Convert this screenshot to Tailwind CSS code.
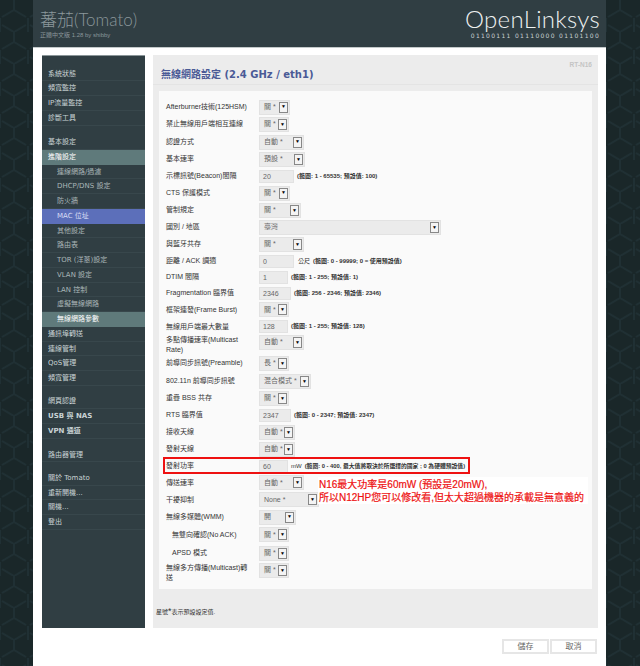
<!DOCTYPE html>
<html lang="zh-Hant">

<head>
  <meta charset="UTF-8">
  <title>Tomato - 無線網路設定</title>
  <script src="https://cdn.jsdelivr.net/npm/@tailwindcss/browser@4"></script>
</head>

<body class="bg-[#1a2729] font-['Liberation_Sans','Noto_Sans_CJK_TC',sans-serif] text-[7px] text-[#333]">
  <div class="flex w-[640px] h-[666px] overflow-hidden">

    <!-- left pattern strip -->
    <svg class="w-[33px] h-[666px] shrink-0" width="33" height="666">
      <defs>
        <pattern id="hexa" width="28" height="32" patternUnits="userSpaceOnUse">
          <path d="M14 0v10M14 10L2 17M14 10l12 7M0 18v14M28 18v14M14 32L2 25M14 32l12-7" fill="none" stroke="#203034" stroke-width="2" />
        </pattern>
      </defs>
      <rect width="33" height="666" fill="url(#hexa)" />
    </svg>

    <div class="w-[573px] shrink-0 flex flex-col bg-white">
      <!-- Header -->
      <div class="h-[48px] shrink-0 bg-[#303e43] border-b border-[#c3c9ca] flex justify-between pl-[7px] pr-[6px]">
        <div class="pt-[10px]">
          <div class="text-[17px] leading-[20px] text-[#8b979b] font-['Lato','Noto_Sans_CJK_TC',sans-serif] font-light">蕃茄(Tomato)</div>
          <div class="text-[6px] leading-[8px] text-[#8b979b] mt-[1px]">正體中文版 1.28 by shibby</div>
        </div>
        <div class="flex flex-col items-end pt-[5px]">
          <div class="text-[24px] leading-[27px] tracking-[0.3px] text-[#eef1f1] font-['Lato',sans-serif] font-light">OpenLinksys</div>
          <div class="text-[6px] leading-[8px] tracking-[1.3px] text-[#c9d0d1] font-['DejaVu_Sans',sans-serif]">01100111 01110000 01101100</div>
        </div>
      </div>

      <div class="flex gap-[8px] pt-[7px] pl-[9px] pr-[8px] h-[580px] shrink-0">
        <!-- Sidebar -->
        <nav class="w-[103px] h-[573px] shrink-0 bg-[#303e43] border-t border-[#8b9699] pt-[10.6px] text-[7px] text-[#c9d3d5] font-['DejaVu_Sans','Noto_Sans_CJK_TC',sans-serif]">
          <div class="h-[14.75px] leading-[14.75px] pl-[6px] border-b border-[#38474c]">系統狀態</div>
          <div class="h-[14.75px] leading-[14.75px] pl-[6px] border-b border-[#38474c]">頻寬監控</div>
          <div class="h-[14.75px] leading-[14.75px] pl-[6px] border-b border-[#38474c]">IP流量監控</div>
          <div class="h-[14.75px] leading-[14.75px] pl-[6px] border-b border-[#38474c]">診斷工具</div>
          <div class="h-[9.5px]"></div>
          <div class="h-[14.75px] leading-[14.75px] pl-[6px] border-b border-[#38474c]">基本設定</div>
          <div class="h-[14.75px] leading-[14.75px] pl-[6px] bg-[#5f7a7b] text-white">進階設定</div>
          <div class="h-[14.75px] leading-[14.75px] pl-[15px] border-b border-[#38474c] text-[#aab6b8]">連線網路/過濾</div>
          <div class="h-[14.75px] leading-[14.75px] pl-[15px] border-b border-[#38474c] text-[#aab6b8]">DHCP/DNS 設定</div>
          <div class="h-[14.75px] leading-[14.75px] pl-[15px] border-b border-[#38474c] text-[#aab6b8]">防火牆</div>
          <div class="h-[14.75px] leading-[14.75px] pl-[15px] bg-[#5c6fba] text-[#d8def5]">MAC 位址</div>
          <div class="h-[14.75px] leading-[14.75px] pl-[15px] border-b border-[#38474c] text-[#aab6b8]">其他設定</div>
          <div class="h-[14.75px] leading-[14.75px] pl-[15px] border-b border-[#38474c] text-[#aab6b8]">路由表</div>
          <div class="h-[14.75px] leading-[14.75px] pl-[15px] border-b border-[#38474c] text-[#aab6b8]">TOR (洋蔥)設定</div>
          <div class="h-[14.75px] leading-[14.75px] pl-[15px] border-b border-[#38474c] text-[#aab6b8]">VLAN 設定</div>
          <div class="h-[14.75px] leading-[14.75px] pl-[15px] border-b border-[#38474c] text-[#aab6b8]">LAN 控制</div>
          <div class="h-[14.75px] leading-[14.75px] pl-[15px] border-b border-[#38474c] text-[#aab6b8]">虛擬無線網路</div>
          <div class="h-[14.75px] leading-[14.75px] pl-[15px] bg-[#5f7a7b] text-white">無線網路參數</div>
          <div class="h-[14.75px] leading-[14.75px] pl-[6px] border-b border-[#38474c]">通訊埠轉送</div>
          <div class="h-[14.75px] leading-[14.75px] pl-[6px] border-b border-[#38474c]">連線管制</div>
          <div class="h-[14.75px] leading-[14.75px] pl-[6px] border-b border-[#38474c]">QoS管理</div>
          <div class="h-[14.75px] leading-[14.75px] pl-[6px] border-b border-[#38474c]">頻寬管理</div>
          <div class="h-[8.5px]"></div>
          <div class="h-[14.75px] leading-[14.75px] pl-[6px] border-b border-[#38474c]">網頁認證</div>
          <div class="h-[14.75px] leading-[14.75px] pl-[6px] border-b border-[#38474c] font-bold">USB 與 NAS</div>
          <div class="h-[14.75px] leading-[14.75px] pl-[6px] border-b border-[#38474c] font-bold">VPN 通道</div>
          <div class="h-[9px]"></div>
          <div class="h-[14.75px] leading-[14.75px] pl-[6px] border-b border-[#38474c]">路由器管理</div>
          <div class="h-[8.5px]"></div>
          <div class="h-[14.75px] leading-[14.75px] pl-[6px] border-b border-[#38474c]">關於 Tomato</div>
          <div class="h-[14.75px] leading-[14.75px] pl-[6px] border-b border-[#38474c]">重新開機...</div>
          <div class="h-[14.75px] leading-[14.75px] pl-[6px] border-b border-[#38474c]">關機...</div>
          <div class="h-[14.75px] leading-[14.75px] pl-[6px] border-b border-[#38474c]">登出</div>
        </nav>

        <!-- Main -->
        <main class="relative w-[445px] h-[573px] shrink-0 bg-[#ececec] whitespace-nowrap">
          <div class="absolute right-[6px] top-[5px] text-[6.5px] font-bold text-[#c4c4c4]">RT-N16</div>
          <h1 class="h-[30px] pl-[8px] pt-[12px] text-[10px] leading-[16px] font-bold text-[#4a5a96] font-['DejaVu_Sans','Noto_Sans_CJK_TC',sans-serif] border-b border-[#e4e4e4]">無線網路設定 (2.4 GHz / eth1)</h1>

          <!-- Settings form -->
          <div class="relative mt-[6px] mx-[6px] h-[498px] bg-[#fafafa] pt-[7.25px] pl-[7px]">
            <div class="flex items-center h-[17.5px]">
              <div class="w-[93px] shrink-0">Afterburner技術(125HSM)</div>
              <div class="w-[31px] h-[15px] bg-[#ebebeb] border border-[#e2e2e2] flex items-center justify-between pl-[4px] pr-[1px] text-[#666]">關 *<span class="w-[9px] h-[11px] border border-[#888] bg-[#f4f4f4] flex items-center justify-center text-[5px] text-black">▼</span></div>
            </div>
            <div class="flex items-center h-[17.5px]">
              <div class="w-[93px] shrink-0">禁止無線用戶端相互連線</div>
              <div class="w-[30px] h-[15px] bg-[#ebebeb] border border-[#e2e2e2] flex items-center justify-between pl-[4px] pr-[1px] text-[#666]">關 *<span class="w-[9px] h-[11px] border border-[#888] bg-[#f4f4f4] flex items-center justify-center text-[5px] text-black">▼</span></div>
            </div>
            <div class="flex items-center h-[17.75px]">
              <div class="w-[93px] shrink-0">認證方式</div>
              <div class="w-[45px] h-[15px] bg-[#ebebeb] border border-[#e2e2e2] flex items-center justify-between pl-[4px] pr-[1px] text-[#666]">自動 *<span class="w-[9px] h-[11px] border border-[#888] bg-[#f4f4f4] flex items-center justify-center text-[5px] text-black">▼</span></div>
            </div>
            <div class="flex items-center h-[17.2px]">
              <div class="w-[93px] shrink-0">基本速率</div>
              <div class="w-[46px] h-[15px] bg-[#ebebeb] border border-[#e2e2e2] flex items-center justify-between pl-[4px] pr-[1px] text-[#666]">預設 *<span class="w-[9px] h-[11px] border border-[#888] bg-[#f4f4f4] flex items-center justify-center text-[5px] text-black">▼</span></div>
            </div>
            <div class="flex items-center h-[16.5px]">
              <div class="w-[93px] shrink-0">示標訊號(Beacon)間隔</div>
              <div class="w-[35px] h-[13px] bg-[#ebebeb] border border-[#e2e2e2] pl-[3px] leading-[11px] text-[#666]">20</div>
              <div class="ml-[3px] text-[6px] font-bold">(範圍: 1 - 65535; 預設值: 100)</div>
            </div>
            <div class="flex items-center h-[17px]">
              <div class="w-[93px] shrink-0">CTS 保護模式</div>
              <div class="w-[31px] h-[15px] bg-[#ebebeb] border border-[#e2e2e2] flex items-center justify-between pl-[4px] pr-[1px] text-[#666]">關 *<span class="w-[9px] h-[11px] border border-[#888] bg-[#f4f4f4] flex items-center justify-center text-[5px] text-black">▼</span></div>
            </div>
            <div class="flex items-center h-[17.2px]">
              <div class="w-[93px] shrink-0">管制規定</div>
              <div class="w-[42px] h-[15px] bg-[#ebebeb] border border-[#e2e2e2] flex items-center justify-between pl-[4px] pr-[1px] text-[#666]">關 *<span class="w-[9px] h-[11px] border border-[#888] bg-[#f4f4f4] flex items-center justify-center text-[5px] text-black">▼</span></div>
            </div>
            <div class="flex items-center h-[17.2px]">
              <div class="w-[93px] shrink-0">國別 / 地區</div>
              <div class="w-[182px] h-[15px] bg-[#ebebeb] border border-[#e2e2e2] flex items-center justify-between pl-[4px] pr-[1px] text-[#666]">臺灣<span class="w-[9px] h-[11px] border border-[#888] bg-[#f4f4f4] flex items-center justify-center text-[5px] text-black">▼</span></div>
            </div>
            <div class="flex items-center h-[17.2px]">
              <div class="w-[93px] shrink-0">與藍牙共存</div>
              <div class="w-[45px] h-[15px] bg-[#ebebeb] border border-[#e2e2e2] flex items-center justify-between pl-[4px] pr-[1px] text-[#666]">關 *<span class="w-[9px] h-[11px] border border-[#888] bg-[#f4f4f4] flex items-center justify-center text-[5px] text-black">▼</span></div>
            </div>
            <div class="flex items-center h-[16.5px]">
              <div class="w-[93px] shrink-0">距離 / ACK 調適</div>
              <div class="w-[35px] h-[13px] bg-[#ebebeb] border border-[#e2e2e2] pl-[3px] leading-[11px] text-[#666]">0</div>
              <div class="ml-[4px] text-[6px]">公尺</div>
              <div class="ml-[3px] text-[6px] font-bold">(範圍: 0 - 99999; 0 = 使用預設值)</div>
            </div>
            <div class="flex items-center h-[15.8px]">
              <div class="w-[93px] shrink-0">DTIM 間隔</div>
              <div class="w-[29px] h-[13px] bg-[#ebebeb] border border-[#e2e2e2] pl-[3px] leading-[11px] text-[#666]">1</div>
              <div class="ml-[3px] text-[6px] font-bold">(範圍: 1 - 255; 預設值: 1)</div>
            </div>
            <div class="flex items-center h-[16px]">
              <div class="w-[93px] shrink-0">Fragmentation 臨界值</div>
              <div class="w-[32px] h-[13px] bg-[#ebebeb] border border-[#e2e2e2] pl-[3px] leading-[11px] text-[#666]">2346</div>
              <div class="ml-[3px] text-[6px] font-bold">(範圍: 256 - 2346; 預設值: 2346)</div>
            </div>
            <div class="flex items-center h-[16.5px]">
              <div class="w-[93px] shrink-0">框架連發(Frame Burst)</div>
              <div class="w-[30px] h-[15px] bg-[#ebebeb] border border-[#e2e2e2] flex items-center justify-between pl-[4px] pr-[1px] text-[#666]">關 *<span class="w-[9px] h-[11px] border border-[#888] bg-[#f4f4f4] flex items-center justify-center text-[5px] text-black">▼</span></div>
            </div>
            <div class="flex items-center h-[17.5px]">
              <div class="w-[93px] shrink-0">無線用戶端最大數量</div>
              <div class="w-[29px] h-[13px] bg-[#ebebeb] border border-[#e2e2e2] pl-[3px] leading-[11px] text-[#666]">128</div>
              <div class="ml-[3px] text-[6px] font-bold">(範圍: 1 - 255; 預設值: 128)</div>
            </div>
            <div class="flex items-center h-[18.8px]">
              <div class="w-[93px] shrink-0 leading-[10px]">多點傳播速率(Multicast<br>Rate)</div>
              <div class="w-[45px] h-[15px] mb-[5px] bg-[#ebebeb] border border-[#e2e2e2] flex items-center justify-between pl-[4px] pr-[1px] text-[#666]">自動 *<span class="w-[9px] h-[11px] border border-[#888] bg-[#f4f4f4] flex items-center justify-center text-[5px] text-black">▼</span></div>
            </div>
            <div class="flex items-center h-[18.2px]">
              <div class="w-[93px] shrink-0">前導同步訊號(Preamble)</div>
              <div class="w-[30px] h-[15px] bg-[#ebebeb] border border-[#e2e2e2] flex items-center justify-between pl-[4px] pr-[1px] text-[#666]">長 *<span class="w-[9px] h-[11px] border border-[#888] bg-[#f4f4f4] flex items-center justify-center text-[5px] text-black">▼</span></div>
            </div>
            <div class="flex items-center h-[17.5px]">
              <div class="w-[93px] shrink-0">802.11n 前導同步訊號</div>
              <div class="w-[52px] h-[15px] bg-[#ebebeb] border border-[#e2e2e2] flex items-center justify-between pl-[4px] pr-[1px] text-[#666]">混合模式 *<span class="w-[9px] h-[11px] border border-[#888] bg-[#f4f4f4] flex items-center justify-center text-[5px] text-black">▼</span></div>
            </div>
            <div class="flex items-center h-[17.2px]">
              <div class="w-[93px] shrink-0">重疊 BSS 共存</div>
              <div class="w-[30px] h-[15px] bg-[#ebebeb] border border-[#e2e2e2] flex items-center justify-between pl-[4px] pr-[1px] text-[#666]">關 *<span class="w-[9px] h-[11px] border border-[#888] bg-[#f4f4f4] flex items-center justify-center text-[5px] text-black">▼</span></div>
            </div>
            <div class="flex items-center h-[16.8px]">
              <div class="w-[93px] shrink-0">RTS 臨界值</div>
              <div class="w-[32px] h-[13px] bg-[#ebebeb] border border-[#e2e2e2] pl-[3px] leading-[11px] text-[#666]">2347</div>
              <div class="ml-[3px] text-[6px] font-bold">(範圍: 0 - 2347; 預設值: 2347)</div>
            </div>
            <div class="flex items-center h-[17px]">
              <div class="w-[93px] shrink-0">接收天線</div>
              <div class="w-[36px] h-[15px] bg-[#ebebeb] border border-[#e2e2e2] flex items-center justify-between pl-[4px] pr-[1px] text-[#666]">自動 *<span class="w-[9px] h-[11px] border border-[#888] bg-[#f4f4f4] flex items-center justify-center text-[5px] text-black">▼</span></div>
            </div>
            <div class="flex items-center h-[16.8px]">
              <div class="w-[93px] shrink-0">發射天線</div>
              <div class="w-[36px] h-[15px] bg-[#ebebeb] border border-[#e2e2e2] flex items-center justify-between pl-[4px] pr-[1px] text-[#666]">自動 *<span class="w-[9px] h-[11px] border border-[#888] bg-[#f4f4f4] flex items-center justify-center text-[5px] text-black">▼</span></div>
            </div>
            <div class="flex items-center h-[16.5px]">
              <div class="w-[93px] shrink-0">發射功率</div>
              <div class="w-[29px] h-[13px] bg-[#ebebeb] border border-[#e2e2e2] pl-[3px] leading-[11px] text-[#666]">60</div>
              <div class="ml-[3px] text-[6px]">mW</div>
              <div class="ml-[3px] text-[5.8px] font-bold">(範圍: 0 - 400, 最大值將取決於所選擇的國家 ; 0 為硬體預設值)</div>
            </div>
            <div class="flex items-center h-[17px]">
              <div class="w-[93px] shrink-0">傳送速率</div>
              <div class="w-[45px] h-[15px] bg-[#ebebeb] border border-[#e2e2e2] flex items-center justify-between pl-[4px] pr-[1px] text-[#666]">自動 *<span class="w-[9px] h-[11px] border border-[#888] bg-[#f4f4f4] flex items-center justify-center text-[5px] text-black">▼</span></div>
            </div>
            <div class="flex items-center h-[17px]">
              <div class="w-[93px] shrink-0">干擾抑制</div>
              <div class="w-[60px] h-[15px] bg-[#ebebeb] border border-[#e2e2e2] flex items-center justify-between pl-[4px] pr-[1px] text-[#666]">None *<span class="w-[9px] h-[11px] border border-[#888] bg-[#f4f4f4] flex items-center justify-center text-[5px] text-black">▼</span></div>
            </div>
            <div class="flex items-center h-[17.5px]">
              <div class="w-[93px] shrink-0">無線多媒體(WMM)</div>
              <div class="w-[37px] h-[15px] bg-[#ebebeb] border border-[#e2e2e2] flex items-center justify-between pl-[4px] pr-[1px] text-[#666]">開<span class="w-[9px] h-[11px] border border-[#888] bg-[#f4f4f4] flex items-center justify-center text-[5px] text-black">▼</span></div>
            </div>
            <div class="flex items-center h-[18px]">
              <div class="w-[93px] shrink-0 pl-[6px]">無雙向確認(No ACK)</div>
              <div class="w-[30px] h-[15px] bg-[#ebebeb] border border-[#e2e2e2] flex items-center justify-between pl-[4px] pr-[1px] text-[#666]">關 *<span class="w-[9px] h-[11px] border border-[#888] bg-[#f4f4f4] flex items-center justify-center text-[5px] text-black">▼</span></div>
            </div>
            <div class="flex items-center h-[19px]">
              <div class="w-[93px] shrink-0 pl-[6px]">APSD 模式</div>
              <div class="w-[30px] h-[15px] bg-[#ebebeb] border border-[#e2e2e2] flex items-center justify-between pl-[4px] pr-[1px] text-[#666]">關 *<span class="w-[9px] h-[11px] border border-[#888] bg-[#f4f4f4] flex items-center justify-center text-[5px] text-black">▼</span></div>
            </div>
            <div class="flex items-center h-[20px]">
              <div class="w-[93px] shrink-0 leading-[10px]">無線多方傳播(Multicast)轉<br>送</div>
              <div class="w-[30px] h-[15px] mb-[5px] bg-[#ebebeb] border border-[#e2e2e2] flex items-center justify-between pl-[4px] pr-[1px] text-[#666]">關 *<span class="w-[9px] h-[11px] border border-[#888] bg-[#f4f4f4] flex items-center justify-center text-[5px] text-black">▼</span></div>
            </div>

            <!-- annotation added over the screenshot -->
            <div class="absolute left-[4px] top-[366px] w-[307px] h-[17px] border-2 border-[#ee1111]"></div>
            <div class="absolute left-[159px] top-[386px] w-[270px] h-[27px] bg-white pl-[1px] pt-[1px] text-[10px] leading-[13px] text-[#ee1111] [-webkit-text-stroke:0.2px_#ee1111]">
              <div>N16最大功率是60mW (預設是20mW),</div>
              <div>所以N12HP您可以修改看,但太大超過機器的承載是無意義的</div>
            </div>
          </div>

          <div class="mt-[17px] pl-[3px] text-[6px] leading-[10px]">星號<span class="text-[9px]">*</span>表示預設設定值.</div>
        </main>
      </div>

      <!-- Save / cancel -->
      <div class="flex justify-end gap-[1px] pt-[11px] pr-[9px]">
        <button class="w-[47px] h-[15px] bg-white border-2 border-[#e6e6e6] text-[8px] leading-[11px] text-[#666]">儲存</button>
        <button class="w-[47px] h-[15px] bg-white border-2 border-[#e6e6e6] text-[8px] leading-[11px] text-[#666]">取消</button>
      </div>
    </div>

    <!-- right pattern strip -->
    <svg class="w-[34px] h-[666px] shrink-0" width="34" height="666">
      <rect width="34" height="666" fill="url(#hexa)" />
    </svg>
  </div>
</body>

</html>
